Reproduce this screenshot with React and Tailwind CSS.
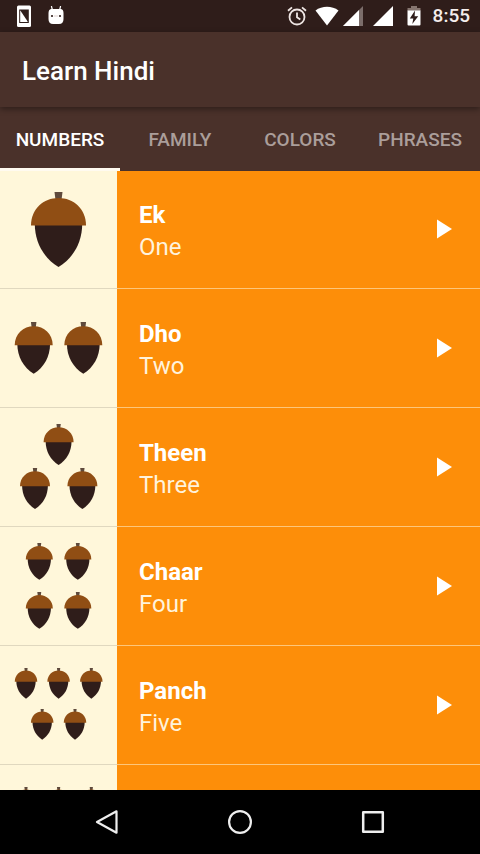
import { useState } from 'react'

const TABS = ['Numbers', 'Family', 'Colors', 'Phrases']

// acorns: [center x, top] inside the 117x118 thumbnail
const WORDS = [
  { hindi: 'Ek', english: 'One', size: 55, acorns: [[58.5, 22]] },
  { hindi: 'Dho', english: 'Two', size: 38, acorns: [[33.7, 33], [83.3, 33]] },
  { hindi: 'Theen', english: 'Three', size: 30, acorns: [[58.6, 16], [35, 60], [82.4, 60]] },
  { hindi: 'Chaar', english: 'Four', size: 27, acorns: [[39.3, 16], [77.8, 16], [39.3, 65], [77.8, 65]] },
  { hindi: 'Panch', english: 'Five', size: 22.5, acorns: [[26, 22], [58.6, 22], [91.3, 22], [42.2, 63], [75, 63]] },
]

const NEXT_THUMB = { size: 22.5, acorns: [[26, 22], [58.6, 22], [91.3, 22], [26, 63], [58.6, 63], [91.3, 63]] }

function Acorn({ x, y, size }) {
  return (
    <g transform={`translate(${x} ${y}) scale(${size / 55})`}>
      <path d="M-4 0H4L3 8H-3Z" fill="#5f4a3c" />
      <path d="M-23.7 32H23.7C23.7 50 15 66 0 75C-15 66 -23.7 50 -23.7 32Z" fill="#2f1d1a" />
      <path d="M-27.5 33.5C-27.5 17 -15 6 0 6S27.5 17 27.5 33.5Z" fill="#904e14" />
    </g>
  )
}

function Thumb({ size, acorns }) {
  return (
    <div className="shrink-0 border-b border-[#e0d8bf] bg-[#fff7da]">
      <svg className="h-[118px] w-[117px]" viewBox="0 0 117 118" aria-hidden="true">
        {acorns.map(([x, y]) => (
          <Acorn key={`${x}-${y}`} x={x} y={y} size={size} />
        ))}
      </svg>
    </div>
  )
}

function StatusBar() {
  return (
    <div className="flex h-8 shrink-0 items-center bg-[#2f1d1a] pl-4 pr-[10px] text-white">
      <svg className="mr-4 h-6 w-4" viewBox="0 0 16 24" aria-hidden="true">
        <rect x="1" y="1.500" width="14" height="21.500" rx="1.500" fill="#fff" />
        <rect x="3.700" y="6" width="8.600" height="12.500" fill="#fff" stroke="#2f1d1a" strokeWidth="1" />
        <path d="M4 6H12V18Z" fill="#2f1d1a" />
      </svg>
      <svg className="h-5 w-4" viewBox="0 0 16 20" aria-hidden="true">
        <path d="M3.400 0L4.400 4M12.600 0L11.600 4" stroke="#fff" strokeWidth="1.200" />
        <path d="M3 3H13Q15.500 3.500 15.500 7V13Q15.500 18 11 18H5Q0.500 18 0.500 13V7Q0.500 3.500 3 3Z" fill="#fff" />
        <circle cx="4" cy="10" r="1.100" fill="#2f1d1a" />
        <circle cx="12" cy="10" r="1.100" fill="#2f1d1a" />
        <path d="M6 10H10" stroke="#d8c4c0" strokeWidth="0.800" />
      </svg>
      <div className="ml-auto flex items-center">
        <svg className="h-5 w-5" viewBox="0 0 20 20" fill="none" stroke="#eee5e3" strokeWidth="1.800" aria-hidden="true">
          <circle cx="10" cy="11" r="7.500" />
          <path d="M10 6.500V11.300L13.300 13.500M1 4.800L5 1.400M19 4.800L15 1.400" />
        </svg>
        <svg className="ml-2 h-5 w-6" viewBox="0 0 24 20" aria-hidden="true">
          <path d="M0.500 4.500C7 -0.500 17 -0.500 23.500 4.500L12 19.500Z" fill="#fff" />
        </svg>
        <svg className="ml-1 h-5 w-5" viewBox="0 0 20 20" aria-hidden="true">
          <path d="M20 0V20H0Z" fill="#7b6d6a" />
          <path d="M16 4V20H0Z" fill="#fff" />
        </svg>
        <svg className="ml-[10px] h-5 w-5" viewBox="0 0 20 20" aria-hidden="true">
          <path d="M20 0V20H0Z" fill="#fff" />
        </svg>
        <svg className="ml-[14px] mr-3 h-5 w-[14px]" viewBox="0 0 14 20" aria-hidden="true">
          <path d="M4 0H10V2H13.500V5H0.500V2H4Z" fill="#85756f" />
          <path d="M0.500 4.500H13.500V18.500Q13.500 19.500 12.500 19.500H1.500Q0.500 19.500 0.500 18.500Z" fill="#fff" />
          <path d="M8 4.500L2.800 12.500H6.300L5.300 18L11.200 10.200H7.600Z" fill="#2f1d1a" />
        </svg>
        <span className="text-[19px] font-medium leading-6 text-[#f5eeec]">8:55</span>
      </div>
    </div>
  )
}

function WordRow({ word }) {
  return (
    <li className="flex">
      <Thumb size={word.size} acorns={word.acorns} />
      <div className="flex flex-1 items-center justify-between border-b border-[#fdc67a] pl-[22px] pr-5">
        <div className="pt-1 text-2xl leading-8">
          <p className="font-bold text-white">{word.hindi}</p>
          <p className="text-[#fff3dc]">{word.english}</p>
        </div>
        <button type="button" aria-label={`Play ${word.hindi}`} className="p-2">
          <svg className="h-5 w-4" viewBox="0 0 16 20" aria-hidden="true">
            <path d="M1 0.500L16 10L1 19.500Z" fill="#fff" />
          </svg>
        </button>
      </div>
    </li>
  )
}

export default function App() {
  const [active, setActive] = useState('Numbers')

  return (
    <div className="flex h-screen flex-col overflow-hidden bg-[#fd8e09] font-[Roboto,sans-serif]">
      <StatusBar />
      <header className="relative z-20 flex h-[75px] shrink-0 items-center bg-[#4a312a] px-[22px] pt-1 shadow-[0_2px_6px_rgba(0,0,0,0.4)]">
        <h1 className="text-[26px] font-medium text-white">Learn Hindi</h1>
      </header>
      <nav className="relative z-10 grid h-16 shrink-0 grid-cols-4 bg-[#4a312a]">
        {TABS.map((tab) => (
          <button
            key={tab}
            type="button"
            onClick={() => setActive(tab)}
            className={`border-b-[3px] pt-[6px] text-[19px] font-medium uppercase ${
              active === tab ? 'border-[#fffaf0] text-white' : 'border-transparent text-[#ab9e9a]'
            }`}
          >
            {tab}
          </button>
        ))}
      </nav>
      {/* list starts 1px under the tab bar */}
      <main className="-mt-px min-h-0 flex-1 overflow-hidden">
        <ul>
          {WORDS.map((word) => (
            <WordRow key={word.hindi} word={word} />
          ))}
        </ul>
        <div className="flex">
          <Thumb size={NEXT_THUMB.size} acorns={NEXT_THUMB.acorns} />
        </div>
      </main>
      <footer className="flex h-16 shrink-0 items-center justify-center gap-[101px] bg-black">
        <button type="button" aria-label="Back" className="p-1">
          <svg className="h-6 w-6" viewBox="0 0 24 24" fill="none" stroke="#eee" strokeWidth="2.200" strokeLinejoin="round" aria-hidden="true">
            <path d="M21.500 1.300V22.700L2 12Z" />
          </svg>
        </button>
        <button type="button" aria-label="Home" className="p-1">
          <svg className="h-6 w-6" viewBox="0 0 24 24" fill="none" stroke="#eee" strokeWidth="2.200" aria-hidden="true">
            <circle cx="12" cy="12" r="10.900" />
          </svg>
        </button>
        <button type="button" aria-label="Recent apps" className="p-1">
          <svg className="h-6 w-6" viewBox="0 0 24 24" fill="none" stroke="#eee" strokeWidth="2.500" strokeLinejoin="round" aria-hidden="true">
            <rect x="2.200" y="2.200" width="19.600" height="19.600" />
          </svg>
        </button>
      </footer>
    </div>
  )
}
